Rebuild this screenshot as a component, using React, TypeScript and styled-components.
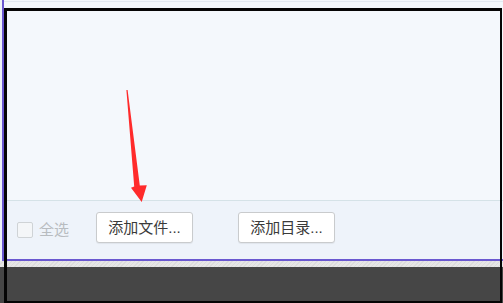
import React from 'react';
import styled, { createGlobalStyle } from 'styled-components';

const GlobalStyle = createGlobalStyle`
  html, body {
    margin: 0;
    padding: 0;
    background: #464646;
  }
  body {
    font-family: "Liberation Sans", "Noto Sans CJK SC", sans-serif;
  }
`;

const Screen = styled.div`
  position: relative;
  width: 503px;
  height: 303px;
  display: flex;
  flex-direction: column;
  background: #464646;
  overflow: hidden;
`;

const Desk = styled.div`
  height: 261px;
  flex: none;
  display: flex;
  padding-left: 2px;
  background: #eef3f8;
  box-sizing: border-box;
`;

const Window = styled.div`
  flex: 1;
  display: flex;
  flex-direction: column;
  border-left: 2px solid #6a58d0;
  border-bottom: 2px solid #6a58d0;
  background: #f4f8fc;
`;

const TopBand = styled.div`
  height: 9px;
  flex: none;
  border-top: 1px solid #e2e9f1;
  margin-top: 1px;
  box-sizing: border-box;
`;

const ListArea = styled.div`
  flex: 1;
  background: #f4f8fc;
  border-bottom: 1px solid #d5e2e7;
`;

const Footer = styled.div`
  height: 58px;
  flex: none;
  display: flex;
  align-items: flex-start;
  padding: 11px 0 0 13px;
  box-sizing: border-box;
  background: #eef3fa;
`;

const SelectAll = styled.label`
  width: 79px;
  flex: none;
  display: flex;
  align-items: center;
  gap: 6px;
  margin-top: 10px;
  font-size: 15px;
  line-height: 16px;
  color: #b8bcc0;
`;

const CheckBox = styled.span`
  width: 14px;
  height: 14px;
  border: 1px solid #cfd3d6;
  border-radius: 2px;
  background: #f4f6f8;
`;

const Button = styled.button<{ $gap?: number }>`
  width: 97px;
  height: 31px;
  margin-left: ${p => p.$gap ?? 0}px;
  padding: 0 0 2px;
  border: 1px solid #c9cbcd;
  border-radius: 3px;
  background: #ffffff;
  box-shadow: 0 1px 1px rgba(0, 0, 0, 0.06);
  font-family: "Liberation Sans", "Noto Sans CJK SC", sans-serif;
  font-size: 15px;
  color: #3a3a3a;
`;

const Strip = styled.div`
  height: 6px;
  flex: none;
  background: repeating-linear-gradient(135deg, #e6e6e6 0 2px, #dcdcdc 2px 3px);
`;

const Dark = styled.div`
  flex: 1;
  background: #464646;
`;

// screenshot selection frame drawn over everything
const SelectionFrame = styled.div`
  position: absolute;
  left: 4px;
  top: 8px;
  width: 498px;
  height: 295px;
  border-style: solid;
  border-color: #050505;
  border-width: 3px 2px 2px 3px;
  box-sizing: border-box;
  pointer-events: none;
`;

const Annotation = styled.svg`
  position: absolute;
  left: 0;
  top: 0;
  pointer-events: none;
`;

export default function App() {
  return (
    <>
      <GlobalStyle />
      <Screen>
        <Desk>
          <Window>
            <TopBand />
            <ListArea />
            <Footer>
              <SelectAll>
                <CheckBox />
                全选
              </SelectAll>
              <Button>添加文件...</Button>
              <Button $gap={45}>添加目录...</Button>
            </Footer>
          </Window>
        </Desk>
        <Strip />
        <Dark />
        <SelectionFrame />
        <Annotation width="503" height="303" viewBox="0 0 503 303">
          <polygon
            points="126.4,90 127.6,90 139.8,185.6 146.8,185.2 141.7,202 131,187.8 134.2,186.4"
            fill="#ff2b2b"
          />
        </Annotation>
      </Screen>
    </>
  );
}
